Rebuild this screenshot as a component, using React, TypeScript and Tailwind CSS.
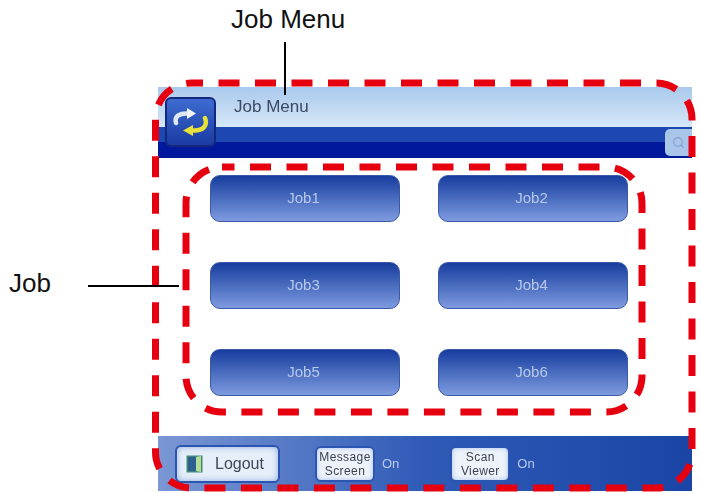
import { Search } from "lucide-react";

const jobs = ["Job1", "Job2", "Job3", "Job4", "Job5", "Job6"];

function SwapIcon() {
  return (
    <svg width="36" height="28" viewBox="0 0 36 28" fill="none">
      <path d="M3 15 C1 8 7 5 15 5.500" stroke="#dbe6f7" strokeWidth="4.500" strokeLinecap="round" />
      <path d="M14 0 L23 5.500 L14 11 Z" fill="#f2f6fc" />
      <path d="M32 10 C35 18 30 23 20 22.500" stroke="#e6e23a" strokeWidth="4.500" strokeLinecap="round" />
      <path d="M20 17 L10 22.500 L20 28 Z" fill="#e6e23a" />
    </svg>
  );
}

function LogoutIcon() {
  return (
    <svg width="17" height="18" viewBox="0 0 17 18">
      <rect x="0.5" y="0.5" width="16" height="17" fill="#3f8a76" />
      <rect x="2" y="2" width="8" height="14" fill="#2f5f8f" />
      <path d="M10 2 L15 1 L15 17 L10 16 Z" fill="#b6dc9a" />
    </svg>
  );
}

function SmallButton({ top, bottom }: { top: string; bottom: string }) {
  return (
    <div className="flex h-[36px] w-[60px] flex-col items-center justify-center rounded-[6px] border-2 border-[#2a55b0] bg-[#eef3fb] text-[12px] leading-[14px] tracking-[0.4px] text-[#3c4250] shadow-[inset_0_0_5px_#a9bfe8]">
      <span>{top}</span>
      <span>{bottom}</span>
    </div>
  );
}

export default function App() {
  return (
    <div className="relative h-[493px] w-[701px] overflow-hidden bg-white font-['Liberation_Sans',Arial,sans-serif]">
      <div className="h-[87px] pl-[231px] pt-[4px] text-[26px] leading-[30px] text-[#111]">Job Menu</div>

      <div className="relative ml-[158px] flex h-[404px] w-[534px] flex-col blur-[0.5px]">
        <div className="flex h-[40px] items-center bg-linear-to-b from-[#a9c9ec] to-[#d6e7f8] pl-[76px] text-[17px] text-[#3b4a62]">
          Job Menu
        </div>
        <div className="flex h-[31px] flex-col">
          <div className="h-[15px] bg-[#1d48b2]" />
          <div className="h-[16px] bg-[#02189c]" />
        </div>

        <div className="grid flex-1 grid-cols-[190px_190px] content-start gap-x-[38px] gap-y-[40px] bg-white pl-[52px] pt-[17px]">
          {jobs.map((job) => (
            <div
              key={job}
              className="flex h-[47px] items-center justify-center rounded-[10px] border border-[#3a59a8] bg-linear-to-b from-[#173c9e] to-[#7f9bdf] pr-[3px] text-[15px] text-[#b7c8ea]"
            >
              {job}
            </div>
          ))}
        </div>

        <div className="flex h-[55px] items-center bg-linear-to-r from-[#7b97d4] via-[#2f5ab6] to-[#1a45a6] pl-[17px]">
          <div className="flex h-[38px] w-[105px] items-center gap-[12px] rounded-[6px] border-2 border-[#2a55b0] bg-[#e6eefa] pl-[9px] text-[16px] text-[#3f4658] shadow-[inset_0_0_6px_#8fabdf]">
            <LogoutIcon />
            <span>Logout</span>
          </div>
          <div className="ml-[35px] flex items-center gap-[7px]">
            <SmallButton top="Message" bottom="Screen" />
            <span className="text-[13px] text-[#b9cdf0]">On</span>
          </div>
          <div className="ml-[51px] flex items-center gap-[7px]">
            <SmallButton top="Scan" bottom="Viewer" />
            <span className="text-[13px] text-[#b9cdf0]">On</span>
          </div>
        </div>

        {/* logo and search sit over the header bands */}
        <div className="absolute left-[7px] top-[10px] flex h-[50px] w-[51px] items-center justify-center rounded-[6px] border-2 border-[#14297e] bg-linear-to-b from-[#3e6cd0] to-[#1a3aa2]">
          <SwapIcon />
        </div>
        <div className="absolute left-[507px] top-[42px] flex h-[27px] w-[27px] items-center justify-center rounded-l-[5px] bg-[#a9c6ea]">
          <Search size={13} className="text-[#7e9fcf]" />
        </div>
      </div>

      {/* red dashed call-outs */}
      <svg className="absolute left-0 top-0" width="701" height="493" fill="none">
        <rect x="155.500" y="83" width="536.500" height="405" rx="36" stroke="#e6000f" strokeWidth="7" strokeDasharray="21 15.5" strokeDashoffset="9.5" />
        <rect x="186" y="167" width="456" height="245" rx="36" stroke="#e6000f" strokeWidth="7" strokeDasharray="21 15.5" strokeDashoffset="8.5" />
      </svg>

      {/* annotation lines */}
      <div className="absolute left-[284px] top-[42px] h-[53px] w-[2px] bg-black" />
      <div className="absolute left-[9px] top-[268px] text-[26px] leading-[30px] text-[#111]">Job</div>
      <div className="absolute left-[88px] top-[285px] h-[2px] w-[91px] bg-black" />
    </div>
  );
}
